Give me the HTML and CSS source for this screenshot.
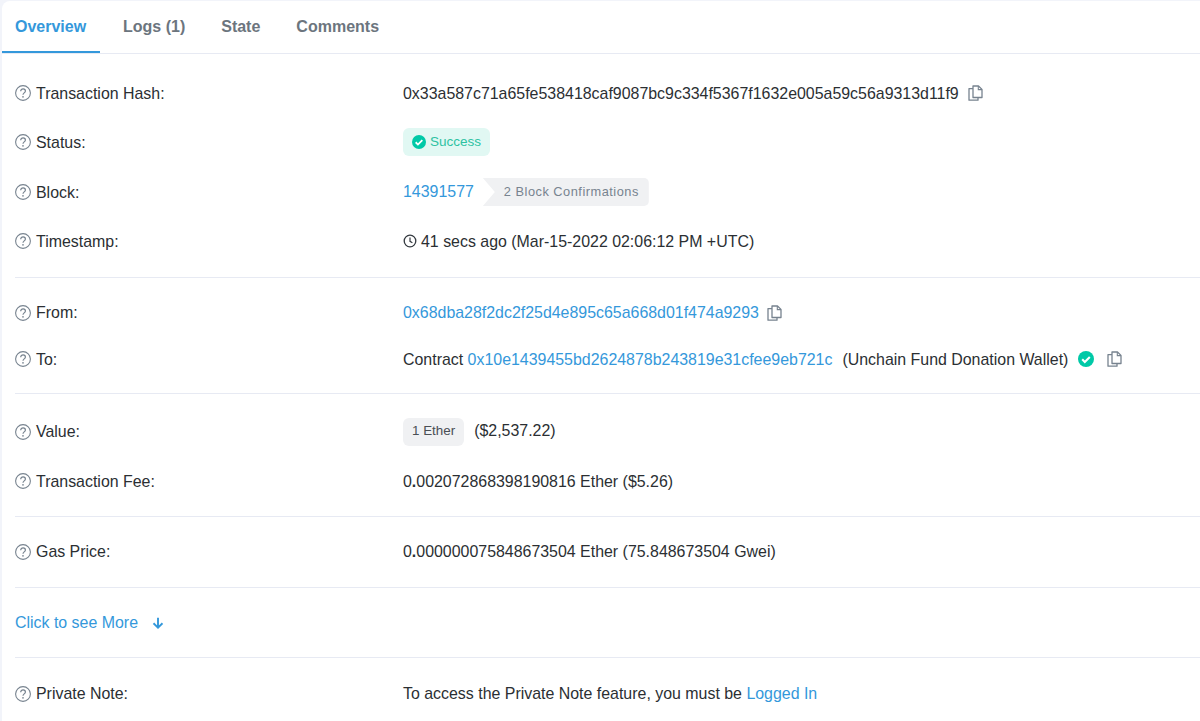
FILE: index.html
```html
<!DOCTYPE html>
<html lang="en">
<head>
<meta charset="utf-8">
<title>Transaction Details</title>
<link rel="stylesheet" href="styles.css">
</head>
<body>
<svg class="sprite" width="0" height="0" aria-hidden="true">
  <symbol id="q" viewBox="0 0 16 16"><circle cx="8" cy="8" r="7.400" fill="none" stroke="currentColor" stroke-width="1.100"/><path d="M5.700 6.200C5.700 4.800 6.800 3.900 8.100 3.900c1.300 0 2.300.9 2.300 2.100 0 1.800-2.400 1.900-2.400 3.700" fill="none" stroke="currentColor" stroke-width="1.200"/><circle cx="8" cy="11.800" r=".85" fill="currentColor"/></symbol>
  <symbol id="copy" viewBox="0 0 15 16"><path d="M5 1h5.500L14 4.400v8.100H5z" fill="none" stroke="currentColor" stroke-width="1.300" stroke-linejoin="round"/><path d="M10.300 1v3.600H14" fill="none" stroke="currentColor" stroke-width="1.100"/><path d="M5 3.600H1v11.600h9v-2.700" fill="none" stroke="currentColor" stroke-width="1.300" stroke-linejoin="round"/></symbol>
  <symbol id="ok" viewBox="0 0 16 16"><circle cx="8" cy="8" r="8" fill="currentColor"/><path d="M4.200 8.300l2.600 2.600 5-5" fill="none" stroke="#fff" stroke-width="2.100"/></symbol>
</svg>
<main class="card">
  <nav class="tabs">
    <a class="tab active">Overview</a>
    <a class="tab">Logs (1)</a>
    <a class="tab">State</a>
    <a class="tab">Comments</a>
  </nav>
  <section class="group first">
    <div class="row r-hash">
      <div class="label"><svg class="qi"><use href="#q"/></svg>Transaction Hash:</div>
      <div class="value">0x33a587c71a65fe538418caf9087bc9c334f5367f1632e005a59c56a9313d11f9<svg class="copy c-hash"><use href="#copy"/></svg></div>
    </div>
    <div class="row r-status">
      <div class="label"><svg class="qi"><use href="#q"/></svg>Status:</div>
      <div class="value"><span class="status"><svg class="ok-s"><use href="#ok"/></svg>Success</span></div>
    </div>
    <div class="row r-block">
      <div class="label"><svg class="qi"><use href="#q"/></svg>Block:</div>
      <div class="value"><a class="link raised">14391577</a><span class="conf">2 Block Confirmations</span></div>
    </div>
    <div class="row r-hash">
      <div class="label"><svg class="qi"><use href="#q"/></svg>Timestamp:</div>
      <div class="value"><svg class="clock" viewBox="0 0 14 14"><circle cx="7" cy="7" r="5.800" fill="none" stroke="currentColor" stroke-width="1.300"/><path d="M7 3.600V7.300l2.400 1.500" fill="none" stroke="currentColor" stroke-width="1.200"/></svg>41 secs ago (Mar-15-2022 02:06:12 PM +UTC)</div>
    </div>
  </section>
  <section class="group addr">
    <div class="row r-from">
      <div class="label"><svg class="qi"><use href="#q"/></svg>From:</div>
      <div class="value"><a class="link">0x68dba28f2dc2f25d4e895c65a668d01f474a9293</a><svg class="copy c-from"><use href="#copy"/></svg></div>
    </div>
    <div class="row r-to">
      <div class="label"><svg class="qi"><use href="#q"/></svg>To:</div>
      <div class="value">Contract&nbsp;<a class="link">0x10e1439455bd2624878b243819e31cfee9eb721c</a><span class="name">(Unchain Fund Donation Wallet)</span><svg class="ok-b"><use href="#ok"/></svg><svg class="copy c-to"><use href="#copy"/></svg></div>
    </div>
  </section>
  <section class="group money">
    <div class="row r-amount">
      <div class="label"><svg class="qi"><use href="#q"/></svg>Value:</div>
      <div class="value"><span class="ether">1 Ether</span><span class="raised">($2,537.22)</span></div>
    </div>
    <div class="row r-fee">
      <div class="label"><svg class="qi"><use href="#q"/></svg>Transaction Fee:</div>
      <div class="value">0<b class="dot">.</b>002072868398190816 Ether ($5.26)</div>
    </div>
  </section>
  <section class="group gas">
    <div class="row r-single">
      <div class="label"><svg class="qi"><use href="#q"/></svg>Gas Price:</div>
      <div class="value">0<b class="dot">.</b>000000075848673504 Ether (75.848673504 Gwei)</div>
    </div>
  </section>
  <section class="group">
    <div class="row r-single"><a class="link more">Click to see More<svg class="arrow" viewBox="0 0 12 12"><path d="M6 .8v9.700M1.500 6.300L6 10.600l4.500-4.300" fill="none" stroke="currentColor" stroke-width="1.900"/></svg></a></div>
  </section>
  <section class="group note">
    <div class="row r-single">
      <div class="label"><svg class="qi"><use href="#q"/></svg>Private Note:</div>
      <div class="value">To access the Private Note feature, you must be&nbsp;<a class="link">Logged In</a></div>
    </div>
  </section>
</main>
</body>
</html>
```
FILE: styles.css
```css
* { box-sizing: border-box; }
html, body { margin: 0; height: 100%; }
body {
  background: #f2f4fa;
  overflow: hidden;
  padding: 1px 0 0 2px;
  font: 15.93px/1.4 "Liberation Sans", Arial, sans-serif;
  color: #2b2f33;
}
.sprite { position: absolute; }
.card {
  background: #fff;
  border-top-left-radius: 8px;
  height: 720px;
  overflow: hidden;
}
.tabs {
  display: flex;
  height: 53px;
  border-bottom: 1px solid #e7eaf3;
}
.tab {
  display: block;
  height: 52px;
  padding: 15px 18px 0;
  font-weight: 700;
  font-size: 16px;
  color: #6c757e;
  white-space: nowrap;
}
.tab.active {
  color: #3498db;
  border-bottom: 2px solid #3498db;
  padding: 15px 13px 0;
  margin-right: 5px;
  width: 98px;
}
.group {
  margin-left: 13px;
  border-top: 1px solid #e7eaf3;
  padding: 11px 0;
}
.group.first { border-top: 0; padding: 15px 0 12px; }
.group.money { padding: 13px 0 10px; }
.group.gas { padding-bottom: 12px; }
.group.note { padding-top: 12px; }
.row { display: flex; align-items: center; padding-top: 2px; }
.r-hash { height: 48px; }
.r-status { height: 50px; }
.r-block { height: 50px; }
.r-from { height: 47px; }
.r-to { height: 46px; }
.r-amount { height: 49px; }
.r-fee { height: 50px; }
.r-single { height: 47px; }
.label {
  flex: 0 0 388px;
  display: flex;
  align-items: center;
}
.qi { width: 16px; height: 16px; margin: -2px 5px 0 0; color: #77838f; flex: none; }
.value { display: flex; align-items: center; white-space: pre; }
.raised { margin-bottom: 2px; }
.link { color: #3498db; }
.copy { width: 15px; height: 16px; margin-top: -2px; color: #77838f; flex: none; }
.c-hash { margin-left: 9px; }
.c-from { margin-left: 8px; }
.c-to { margin-left: 13px; }
.status {
  display: inline-flex;
  align-items: center;
  height: 28px;
  margin-top: -2px;
  padding: 0 9px;
  border-radius: 6px;
  background: #e1f8f3;
  color: #2dc2a2;
  font-size: 13.500px;
}
.ok-s { width: 14px; height: 14px; margin-right: 4px; color: #00c9a7; }
.ok-b { width: 16px; height: 16px; margin: -2px 0 0 10px; color: #00c9a7; }
.conf {
  display: inline-flex;
  align-items: center;
  height: 28px;
  margin: -2px 0 0 9px;
  padding: 0 10px 0 21px;
  background: #f0f1f3;
  border-radius: 0 5px 5px 0;
  color: #77838f;
  font-size: 12.800px;
  letter-spacing: .5px;
  clip-path: polygon(0 0, 100% 0, 100% 100%, 0 100%, 12px 50%);
}
.clock { width: 14px; height: 14px; margin: -2px 4px 0 0; color: #343a40; }
.ether {
  display: inline-flex;
  align-items: center;
  height: 28px;
  margin: -2px 10px 0 0;
  padding: 0 9px;
  border-radius: 6px;
  background: #f0f1f3;
  color: #4a4f55;
  font-size: 13.400px;
}
.name { margin-left: 10px; }
.dot { font-weight: 700; }
.more { display: flex; align-items: center; }
.arrow { width: 12px; height: 12px; margin: -2px 0 0 14px; }
```
